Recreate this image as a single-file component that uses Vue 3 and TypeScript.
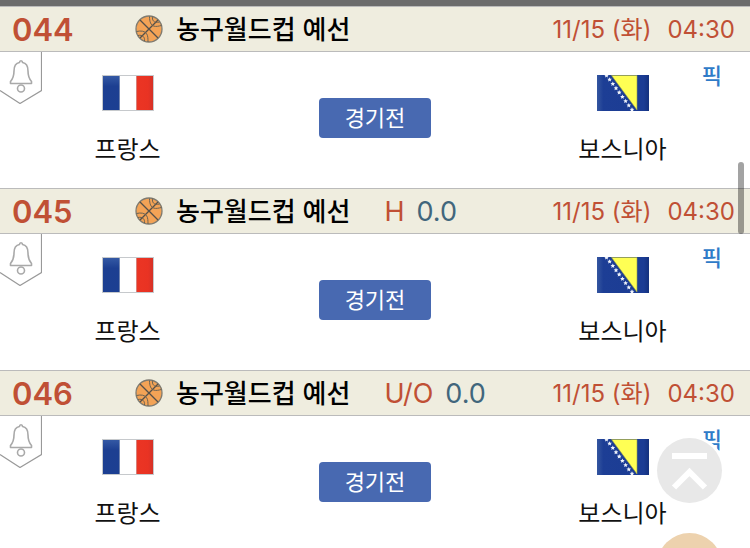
<script setup lang="ts">
interface Match {
  id: string
  league: string
  kind?: string
  line?: string
  date: string
  time: string
  home: string
  away: string
}

const base = {
  league: '농구월드컵 예선',
  date: '11/15 (화)',
  time: '04:30',
  home: '프랑스',
  away: '보스니아',
}

const matches: Match[] = [
  { id: '044', ...base },
  { id: '045', ...base, kind: 'H', line: '0.0' },
  { id: '046', ...base, kind: 'U/O', line: '0.0' },
]

// Centres of the stars along the diagonal of the Bosnian flag
const stars: [number, number][] = [
  [9.5, 0.5], [12.6, 4.5], [15.8, 8.8], [19, 13.1], [22.2, 17.4],
  [25.4, 21.7], [28.6, 26], [31.8, 30.3], [35, 34.6],
]
</script>

<template>
  <main class="page">
    <div class="topbar"></div>
    <article v-for="m in matches" :key="m.id" class="match">
      <header class="head">
        <span class="num">{{ m.id }}</span>
        <svg class="ball" viewBox="0 0 28 28" aria-hidden="true">
          <circle cx="14" cy="14" r="13" fill="#f3a356" />
          <g fill="none" stroke="#6b6252" stroke-width="1.3">
            <circle cx="14" cy="14" r="13" stroke="#7f7b70" />
            <path d="M5 5 23 23M23 5 5 23" stroke="#54504a" />
            <path d="M14.5 1.500C14.500 7 16 10 18.500 11C21 12 24 11 26.500 10.500M17.500 1.500C17 5 18.500 8.500 24.500 7" stroke-width="1" />
            <path d="M1.500 16.500C6 15.500 9.500 16 11.500 18.500C13 20.500 13 24 13 27M3 20.500C7.500 19.500 10 22 9.500 26" stroke-width="1" />
          </g>
        </svg>
        <h2 class="league">{{ m.league }}</h2>
        <span v-if="m.kind" class="odds">
          <span class="kind">{{ m.kind }}</span>
          <span class="line">{{ m.line }}</span>
        </span>
        <span class="when">
          <span>{{ m.date }}</span>
          <span>{{ m.time }}</span>
        </span>
      </header>
      <div class="body">
        <button class="bell" type="button" aria-label="알림">
          <svg viewBox="0 0 42 52" aria-hidden="true">
            <path d="M41.500 0V38.500L20 51.500 0 38.500" fill="none" stroke="#999" stroke-width="1.200" />
            <g fill="none" stroke="#a9a9a9" stroke-width="1.600" stroke-linejoin="round">
              <path d="M10.500 31.500V29.500C13.500 26 14 24 14 19C14 14 16 11 19.500 10.500Q19.500 8.800 21 8.800Q22.500 8.800 22.500 10.500C26 11 28 14 28 19C28 24 28.500 26 31.500 29.500V31.500Z" />
              <circle cx="21" cy="36.500" r="3.500" />
            </g>
          </svg>
        </button>
        <div class="team">
          <svg class="flag" viewBox="0 0 52 36" aria-hidden="true">
            <defs>
              <linearGradient :id="'fb' + m.id" x1="0" y1="0" x2="0" y2="1">
                <stop offset="0" stop-color="#3459a4" />
                <stop offset=".3" stop-color="#1d3f91" />
                <stop offset="1" stop-color="#1c3f92" />
              </linearGradient>
              <linearGradient :id="'fr' + m.id" x1="0" y1="0" x2="1" y2="0">
                <stop offset="0" stop-color="#eb3524" />
                <stop offset=".7" stop-color="#e93323" />
                <stop offset="1" stop-color="#d43127" />
              </linearGradient>
            </defs>
            <rect width="52" height="36" fill="#c6c9cc" />
            <rect x="1" y="1" width="16.500" height="34" :fill="`url(#fb${m.id})`" />
            <rect x="18" y="1" width="16" height="34" fill="#fff" />
            <rect x="34.500" y="1" width="16.500" height="34" :fill="`url(#fr${m.id})`" />
          </svg>
          <span class="name">{{ m.home }}</span>
        </div>
        <span class="state">경기전</span>
        <div class="team">
          <svg class="flag" viewBox="0 0 52 36" aria-hidden="true">
            <defs>
              <linearGradient :id="'bb' + m.id" x1="0" y1="0" x2="1" y2="0">
                <stop offset="0" stop-color="#3556a0" />
                <stop offset=".12" stop-color="#1d3e95" />
                <stop offset=".9" stop-color="#1b3c94" />
                <stop offset="1" stop-color="#14317d" />
              </linearGradient>
            </defs>
            <rect width="52" height="36" :fill="`url(#bb${m.id})`" />
            <path d="M14.500 .5H40V35Z" fill="#ffff54" stroke="#99a04c" stroke-width=".6" />
            <path
              v-for="([x, y], i) in stars"
              :key="i"
              :transform="`translate(${x} ${y})`"
              d="M0-2.300.7-.8 2.300-.7 1.100.5 1.500 2.100 0 1.300-1.500 2.100-1.100.5-2.300-.7-.7-.8Z"
              fill="#eef2fa"
            />
          </svg>
          <span class="name">{{ m.away }}</span>
        </div>
        <a class="pick" href="#">픽</a>
      </div>
    </article>

    <span class="scroll"></span>
    <div class="float">
      <button class="top" type="button" aria-label="맨 위로">
        <svg viewBox="0 0 65 65" aria-hidden="true">
          <path d="M15 18H50" stroke="#fff" stroke-width="6" />
          <path d="M17 49.500 32.500 34 48 49.500" fill="none" stroke="#fff" stroke-width="6" />
        </svg>
      </button>
      <button class="extra" type="button" aria-label="메뉴"></button>
    </div>
  </main>
</template>

<style>
body {
  background: #fff;
}
</style>

<style scoped>
.page {
  position: relative;
  height: 100vh;
  overflow: hidden;
  font-family: Inter, "Noto Sans CJK KR", sans-serif;
  color: #111;
}
.topbar {
  height: 6px;
  background: #6c6c6c;
}
.head {
  box-sizing: border-box;
  display: flex;
  align-items: center;
  height: 46px;
  padding: 2px 15px 0 12px;
  background: #efeddf;
  border-top: 1px solid #bbb;
  border-bottom: 1px solid #bbb;
  line-height: 42px;
  white-space: nowrap;
}
.num {
  width: 123px;
  font-size: 31px;
  font-weight: 600;
  color: #c05035;
}
.ball {
  width: 28px;
  height: 28px;
  margin-bottom: 2px;
}
.league {
  margin: 0 0 0 13px;
  font-size: 26px;
  font-weight: 500;
  color: #000;
}
.odds {
  display: flex;
  gap: 12px;
  margin-left: 34px;
  font-size: 27px;
}
.kind {
  color: #c05035;
}
.line {
  color: #41667c;
}
.when {
  display: flex;
  gap: 16px;
  margin-left: auto;
  font-size: 24px;
  color: #c05035;
}
.body {
  position: relative;
  display: grid;
  grid-template-columns: 34fr 32fr 34fr;
  align-items: start;
  height: 136px;
}
.bell {
  position: absolute;
  top: 0;
  left: 0;
  width: 42px;
  height: 52px;
  padding: 0;
  border: 0;
  background: none;
}
.bell svg,
.top svg {
  display: block;
  width: 100%;
  height: 100%;
}
.team {
  display: flex;
  flex-direction: column;
  align-items: center;
  gap: 21px;
  padding-top: 23px;
}
.flag {
  width: 52px;
  height: 36px;
}
.name {
  font-size: 24px;
  line-height: 36px;
}
.state {
  justify-self: center;
  width: 112px;
  margin-top: 46px;
  border-radius: 4px;
  background: #4869b1;
  color: #fff;
  font-size: 22px;
  line-height: 40px;
  text-align: center;
}
.pick {
  position: absolute;
  top: 8px;
  right: 28px;
  font-size: 22px;
  font-weight: 500;
  line-height: 32px;
  color: #2f7bc8;
  text-decoration: none;
}
.scroll {
  position: absolute;
  top: 162px;
  right: 6px;
  width: 6px;
  height: 72px;
  border-radius: 3px;
  background: rgba(0, 0, 0, 0.36);
}
.float {
  position: absolute;
  right: 28px;
  bottom: -50px;
  display: flex;
  flex-direction: column;
  gap: 30px;
}
.top,
.extra {
  width: 65px;
  height: 65px;
  padding: 0;
  border: 0;
  border-radius: 50%;
  background: #e8e8e8;
}
.top {
  box-shadow: 0 0 0 3px #fff;
}
.extra {
  background: #edd2ae;
}
</style>
